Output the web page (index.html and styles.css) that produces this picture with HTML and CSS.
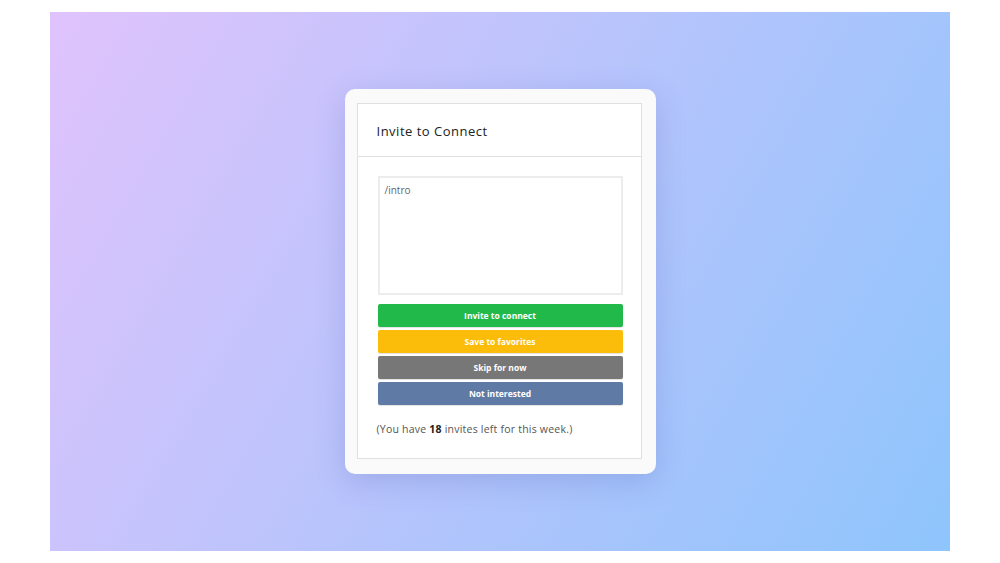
FILE: index.html
```html
<!DOCTYPE html>
<html>
<head>
<meta charset="utf-8">
<link rel="stylesheet" href="styles.css">
</head>
<body>
<div class="stage">
  <div class="card">
    <div class="panel">
      <div class="panel-head">Invite to Connect</div>
      <div class="panel-body">
        <div class="message">/intro</div>
        <div class="actions">
          <button class="btn btn-green">Invite to connect</button>
          <button class="btn btn-yellow">Save to favorites</button>
          <button class="btn btn-gray">Skip for now</button>
          <button class="btn btn-blue">Not interested</button>
        </div>
        <p class="note">(You have <b>18</b> invites left for this week.)</p>
      </div>
    </div>
  </div>
</div>
</body>
</html>
```
FILE: styles.css
```css
html, body {
  margin: 0;
  padding: 0;
  background: #ffffff;
  font-family: "Open Sans", "Noto Sans", sans-serif;
}
.stage {
  margin: 12px 0 0 50px;
  width: 900px;
  height: 539px;
  background: linear-gradient(120deg, #e0c3fc 0%, #8ec5fc 100%);
  display: flex;
  align-items: center;
  justify-content: center;
}
.card {
  box-sizing: border-box;
  width: 311px;
  height: 385px;
  padding: 14px 14px 15px 12px;
  background: #fafafa;
  border-radius: 10px;
  box-shadow: 0 8px 30px rgba(70, 80, 170, 0.22);
}
.panel {
  box-sizing: border-box;
  height: 356px;
  background: #ffffff;
  border: 1px solid #e0e0e0;
}
.panel-head {
  box-sizing: border-box;
  height: 53px;
  border-bottom: 1px solid #e0e0e0;
  padding: 2px 0 0 19px;
  display: flex;
  align-items: center;
  font-size: 13px;
  letter-spacing: 0.5px;
  color: #222;
}
.panel-body {
  padding: 19px 19px 0 20px;
}
.message {
  box-sizing: border-box;
  width: 245px;
  height: 119px;
  border: 2px solid #ececec;
  padding: 5px 5px;
  font-size: 10px;
  color: #666;
}
.actions {
  margin-top: 9px;
  display: flex;
  flex-direction: column;
  gap: 3px;
}
.btn {
  width: 245px;
  height: 23px;
  border: none;
  border-radius: 2px;
  color: #ffffff;
  font-family: "Open Sans", "Noto Sans", sans-serif;
  font-weight: 700;
  font-size: 8.5px;
  padding: 0;
  box-shadow: 0 1px 1px rgba(0, 0, 0, 0.12);
}
.btn-green { background: #21b94a; }
.btn-yellow { background: #fcbc0a; }
.btn-gray { background: #777777; }
.btn-blue { background: #5f7aa4; }
.note {
  margin: 17px 0 0 -1px;
  font-size: 10.5px;
  letter-spacing: 0.22px;
  line-height: 14px;
  color: #555;
}
.note b {
  color: #222;
}
```
